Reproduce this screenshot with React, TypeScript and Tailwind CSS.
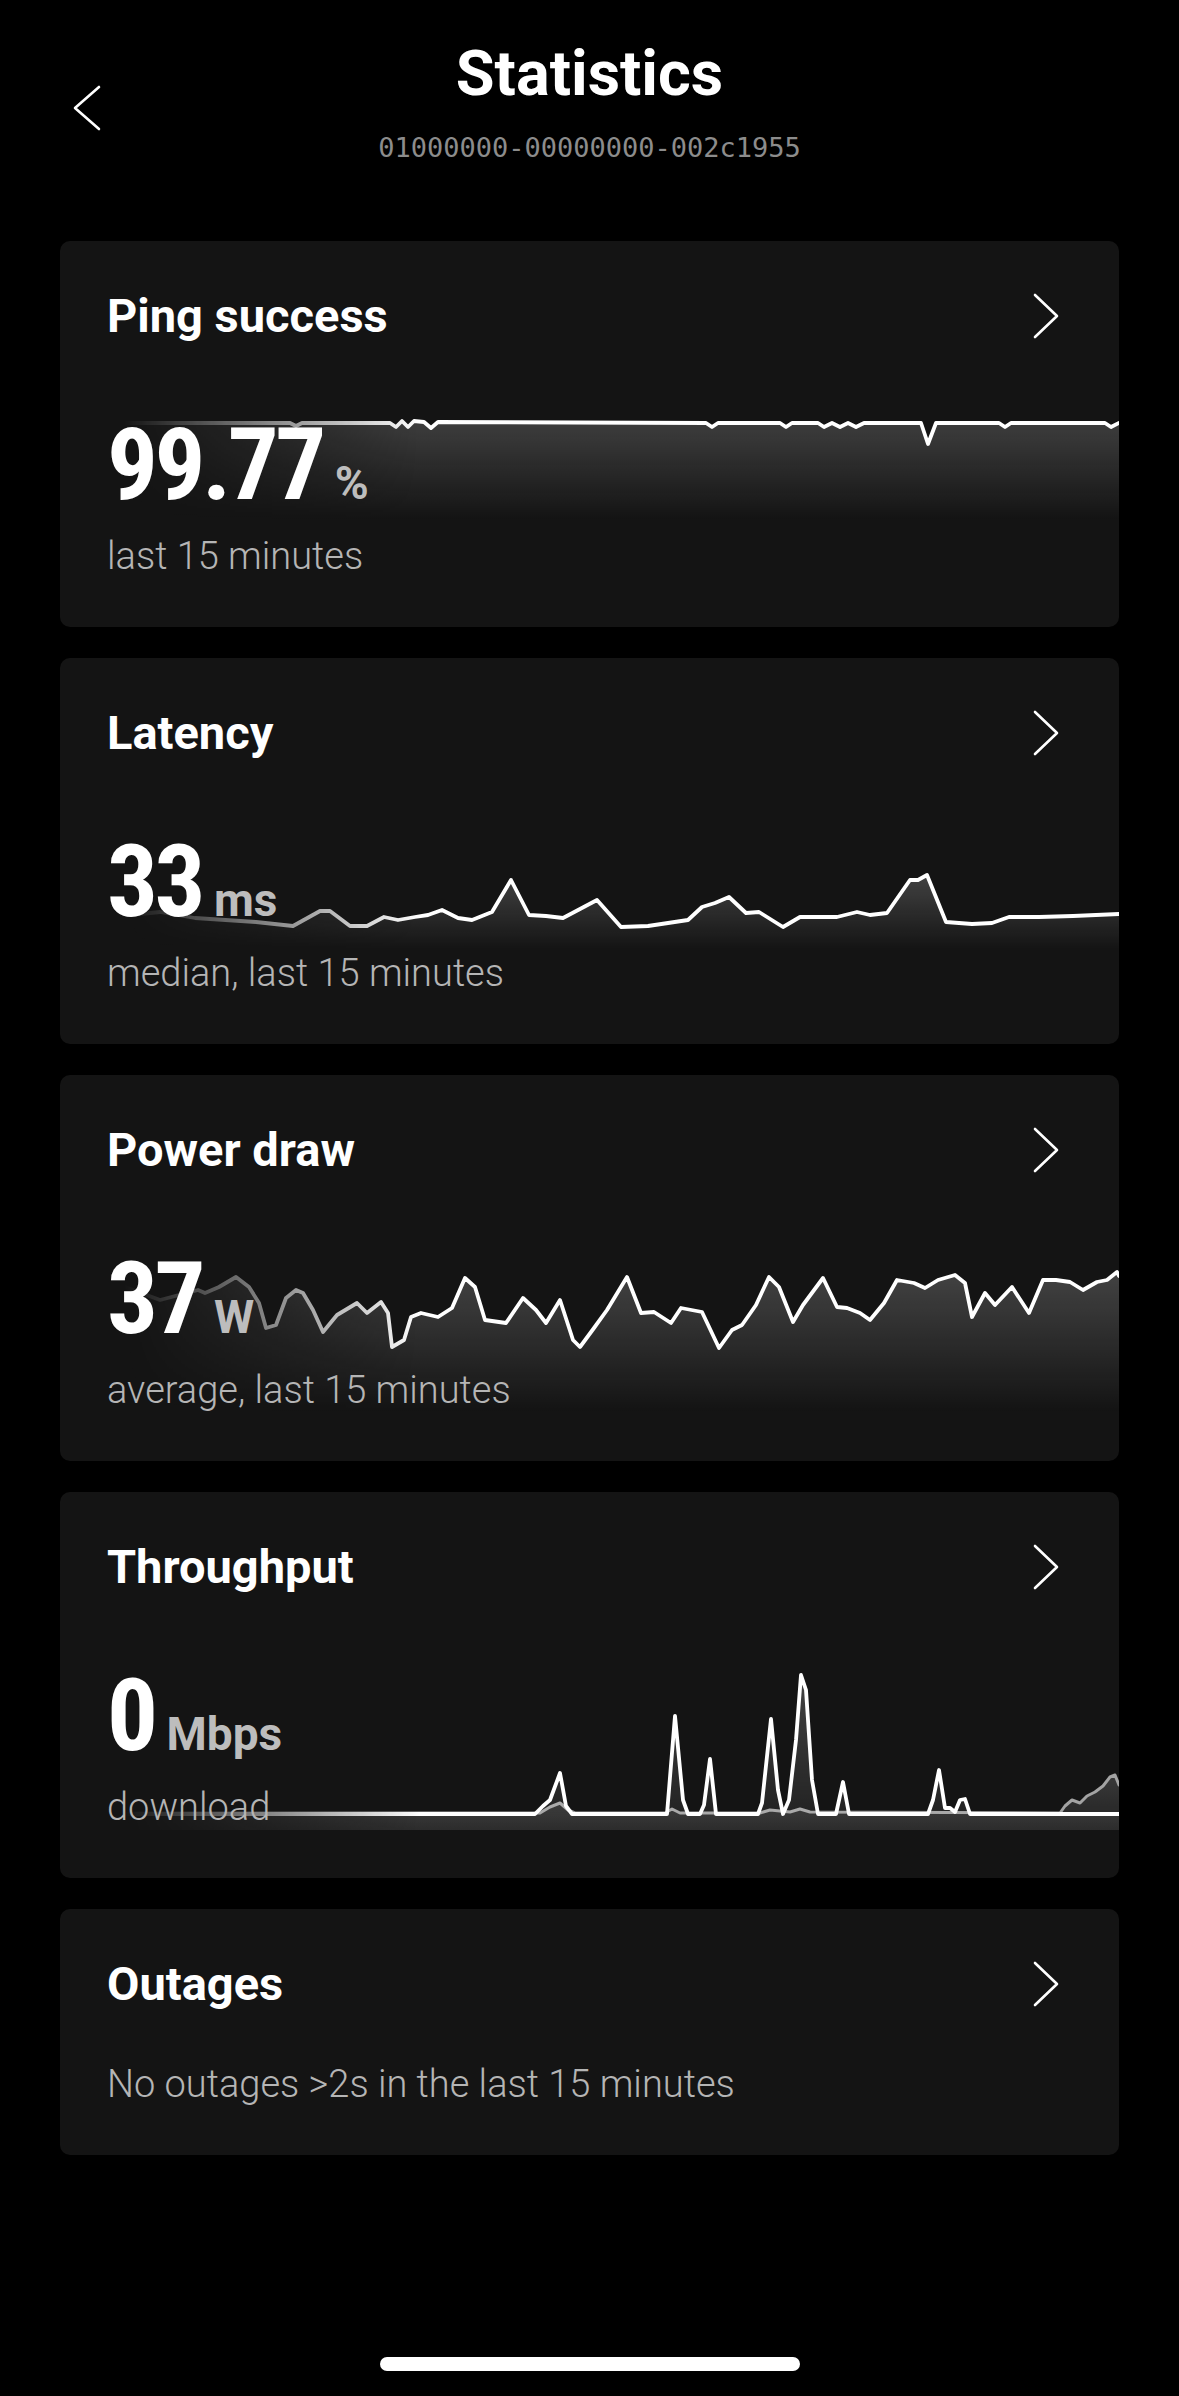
import React from "react";

type Pt = [number, number];

type Series = {
  points: Pt[];
  stroke: string;
  strokeWidth: number;
  fillFrom: number;
  fillTo: number;
};

const CARD_W = 1059;

// points are given in page coords, chart origin is (60, top)
function rel(points: Pt[], top: number): Pt[] {
  return points.map(([x, y]) => [x - 60, y - top]);
}

function Sparkline({
  id,
  className,
  height,
  series,
}: {
  id: string;
  className: string;
  height: number;
  series: Series[];
}) {
  return (
    <svg
      className={`pointer-events-none absolute left-0 w-full [mask-image:linear-gradient(to_right,transparent_6%,black_34%)] ${className}`}
      viewBox={`0 0 ${CARD_W} ${height}`}
      preserveAspectRatio="none"
    >
      <defs>
        {series.map((s, i) => {
          const minY = Math.min(...s.points.map((p) => p[1]));
          return (
            <linearGradient
              key={i}
              id={`${id}-g${i}`}
              x1="0"
              y1={minY}
              x2="0"
              y2={height}
              gradientUnits="userSpaceOnUse"
            >
              <stop offset="0" stopColor="#ffffff" stopOpacity={s.fillFrom} />
              <stop offset="1" stopColor="#ffffff" stopOpacity={s.fillTo} />
            </linearGradient>
          );
        })}
      </defs>
      {series.map((s, i) => {
        const line = s.points.map((p, j) => `${j ? "L" : "M"}${p[0]} ${p[1]}`).join(" ");
        const last = s.points[s.points.length - 1];
        const first = s.points[0];
        const area = `${line} L${last[0]} ${height} L${first[0]} ${height} Z`;
        return (
          <g key={i}>
            <path d={area} fill={`url(#${id}-g${i})`} />
            <path
              d={line}
              fill="none"
              stroke={s.stroke}
              strokeWidth={s.strokeWidth}
              strokeLinejoin="round"
              strokeLinecap="round"
            />
          </g>
        );
      })}
    </svg>
  );
}

const pingPts: Pt[] = rel(
  [
    [60, 423], [290, 423], [296, 426], [302, 423], [390, 423], [396, 427], [402, 421],
    [408, 427], [414, 421], [424, 422], [431, 428], [438, 422], [706, 423], [712, 427],
    [718, 423], [780, 423], [786, 427], [792, 423], [818, 423], [824, 427], [832, 423],
    [840, 427], [848, 423], [856, 427], [864, 423], [921, 423], [928, 444], [936, 423],
    [999, 423], [1005, 427], [1011, 423], [1105, 423], [1111, 427], [1119, 423],
  ],
  410,
);

const latencyPts: Pt[] = rel(
  [
    [60, 915], [120, 916], [160, 912], [195, 918], [256, 922], [293, 926], [320, 911],
    [330, 911], [350, 926], [367, 926], [384, 917], [398, 920], [415, 917], [428, 915],
    [442, 910], [458, 918], [472, 920], [492, 912], [511, 880], [529, 915], [546, 916],
    [563, 918], [597, 900], [621, 927], [648, 926], [688, 920], [702, 907], [715, 903],
    [729, 897], [746, 913], [759, 912], [783, 927], [800, 917], [837, 917], [857, 912],
    [870, 915], [887, 913], [910, 880], [918, 880], [927, 875], [946, 922], [972, 924],
    [992, 923], [1009, 917], [1039, 917], [1073, 916], [1119, 914],
  ],
  860,
);

const powerPts: Pt[] = rel(
  [
    [60, 1290], [120, 1285], [160, 1300], [198, 1290], [205, 1293], [219, 1287],
    [236, 1277], [249, 1287], [259, 1303], [266, 1328], [276, 1325], [286, 1298],
    [296, 1290], [303, 1293], [313, 1310], [323, 1332], [337, 1315], [357, 1303],
    [367, 1313], [381, 1302], [388, 1313], [392, 1347], [404, 1340], [411, 1317],
    [421, 1313], [438, 1317], [452, 1308], [465, 1278], [475, 1287], [485, 1320],
    [506, 1323], [523, 1298], [536, 1310], [546, 1323], [560, 1300], [573, 1340],
    [580, 1347], [594, 1328], [607, 1310], [627, 1277], [641, 1313], [654, 1312],
    [671, 1323], [681, 1308], [702, 1312], [719, 1348], [732, 1330], [742, 1325],
    [756, 1305], [769, 1277], [779, 1287], [793, 1322], [803, 1305], [823, 1278],
    [837, 1307], [847, 1308], [860, 1313], [870, 1320], [884, 1303], [897, 1280],
    [914, 1283], [925, 1288], [938, 1280], [955, 1275], [965, 1283], [972, 1317],
    [985, 1293], [995, 1305], [1012, 1287], [1029, 1313], [1043, 1280], [1056, 1280],
    [1070, 1282], [1083, 1290], [1097, 1282], [1107, 1280], [1117, 1272], [1119, 1276],
  ],
  1262,
);

const downPts: Pt[] = rel(
  [
    [60, 1814], [535, 1814], [543, 1806], [550, 1800], [560, 1773], [566, 1806],
    [572, 1814], [667, 1814], [675, 1716], [683, 1800], [688, 1814], [700, 1814],
    [704, 1805], [710, 1759], [716, 1814], [758, 1814], [762, 1803], [771, 1719],
    [778, 1790], [783, 1814], [789, 1800], [796, 1740], [801, 1675], [806, 1690],
    [812, 1780], [818, 1814], [836, 1814], [843, 1782], [849, 1814], [928, 1814],
    [933, 1800], [939, 1770], [945, 1808], [950, 1808], [955, 1812], [960, 1800],
    [965, 1799], [970, 1814], [1119, 1814],
  ],
  1665,
);

const upPts: Pt[] = rel(
  [
    [60, 1813], [540, 1813], [550, 1807], [560, 1803], [568, 1810], [575, 1813],
    [665, 1813], [672, 1809], [680, 1813], [760, 1813], [770, 1810], [790, 1812],
    [800, 1809], [810, 1812], [1060, 1813], [1065, 1806], [1072, 1800], [1080, 1803],
    [1087, 1796], [1095, 1792], [1103, 1786], [1110, 1777], [1115, 1775], [1119, 1785],
  ],
  1665,
);

function ChevronRight() {
  return (
    <svg width="26" height="46" viewBox="0 0 26 46" className="shrink-0">
      <polyline
        points="2,2 24,23 2,44"
        fill="none"
        stroke="#ffffff"
        strokeWidth="2.6"
        strokeLinecap="round"
        strokeLinejoin="round"
      />
    </svg>
  );
}

function StatCard({
  title,
  value,
  unit,
  caption,
  chart,
}: {
  title: string;
  value: string;
  unit: string;
  caption: string;
  chart: React.ReactNode;
}) {
  return (
    <div className="relative h-[386px] overflow-hidden rounded-[10px] bg-[#141414]">
      {chart}
      <div className="relative flex flex-col pt-[51px] pl-[47px] pr-[60px]">
        <div className="flex items-center justify-between">
          <h2 className="text-[47px] leading-none font-bold text-white">{title}</h2>
          <ChevronRight />
        </div>
        <div className="mt-[75px] flex items-baseline">
          <span className="text-[101px] leading-none font-bold tracking-[-0.035em] font-stretch-[75%] text-white">
            {value}
          </span>
          <span className="ml-[12px] text-[46px] leading-none font-bold text-[#bdbdbd]">
            {unit}
          </span>
        </div>
        <p className="mt-[22px] text-[38px] leading-none font-light text-[#b5b5b5]">{caption}</p>
      </div>
    </div>
  );
}

export default function App() {
  return (
    <div className="flex min-h-[2396px] flex-col bg-black font-[Roboto,'Liberation_Sans',sans-serif]">
      <header className="grid grid-cols-[1fr_auto_1fr] pt-[42px]">
        <div className="pl-[73px] pt-[43px]">
          <svg width="28" height="46" viewBox="0 0 28 46">
            <polyline
              points="26,2 2,23 26,44"
              fill="none"
              stroke="#ffffff"
              strokeWidth="2.6"
              strokeLinecap="round"
              strokeLinejoin="round"
            />
          </svg>
        </div>
        <div className="flex flex-col items-center">
          <h1 className="text-[63px] leading-none font-bold text-white">Statistics</h1>
          <p className="mt-[29px] font-['DejaVu_Sans_Mono','Liberation_Mono',monospace] text-[27px] leading-none text-[#8c8c8c]">
            01000000-00000000-002c1955
          </p>
        </div>
        <div />
      </header>

      <main className="mt-[80px] flex flex-col gap-[31px] px-[60px]">
        <StatCard
          title="Ping success"
          value="99.77"
          unit="%"
          caption="last 15 minutes"
          chart={
            <Sparkline
              id="ping"
              className="top-[169px] h-[110px]"
              height={110}
              series={[
                { points: pingPts, stroke: "#ffffff", strokeWidth: 3.8, fillFrom: 0.18, fillTo: 0 },
              ]}
            />
          }
        />
        <StatCard
          title="Latency"
          value="33"
          unit="ms"
          caption="median, last 15 minutes"
          chart={
            <Sparkline
              id="lat"
              className="top-[202px] h-[90px]"
              height={90}
              series={[
                { points: latencyPts, stroke: "#ffffff", strokeWidth: 3.8, fillFrom: 0.2, fillTo: 0 },
              ]}
            />
          }
        />
        <StatCard
          title="Power draw"
          value="37"
          unit="W"
          caption="average, last 15 minutes"
          chart={
            <Sparkline
              id="pow"
              className="top-[187px] h-[150px]"
              height={150}
              series={[
                { points: powerPts, stroke: "#ffffff", strokeWidth: 3.8, fillFrom: 0.2, fillTo: 0 },
              ]}
            />
          }
        />
        <StatCard
          title="Throughput"
          value="0"
          unit="Mbps"
          caption="download"
          chart={
            <Sparkline
              id="thr"
              className="top-[173px] h-[165px]"
              height={165}
              series={[
                { points: upPts, stroke: "#a3a3a3", strokeWidth: 3, fillFrom: 0.16, fillTo: 0.06 },
                { points: downPts, stroke: "#ffffff", strokeWidth: 3.8, fillFrom: 0.2, fillTo: 0.05 },
              ]}
            />
          }
        />

        <div className="h-[246px] rounded-[10px] bg-[#141414] pt-[51px] pl-[47px] pr-[60px]">
          <div className="flex items-center justify-between">
            <h2 className="text-[47px] leading-none font-bold text-white">Outages</h2>
            <ChevronRight />
          </div>
          <p className="mt-[58px] text-[38px] leading-none font-light text-[#b5b5b5]">
            No outages &gt;2s in the last 15 minutes
          </p>
        </div>
      </main>

      <div className="mt-auto mb-[25px] flex justify-center">
        <div className="h-[14px] w-[420px] rounded-full bg-white" />
      </div>
    </div>
  );
}
